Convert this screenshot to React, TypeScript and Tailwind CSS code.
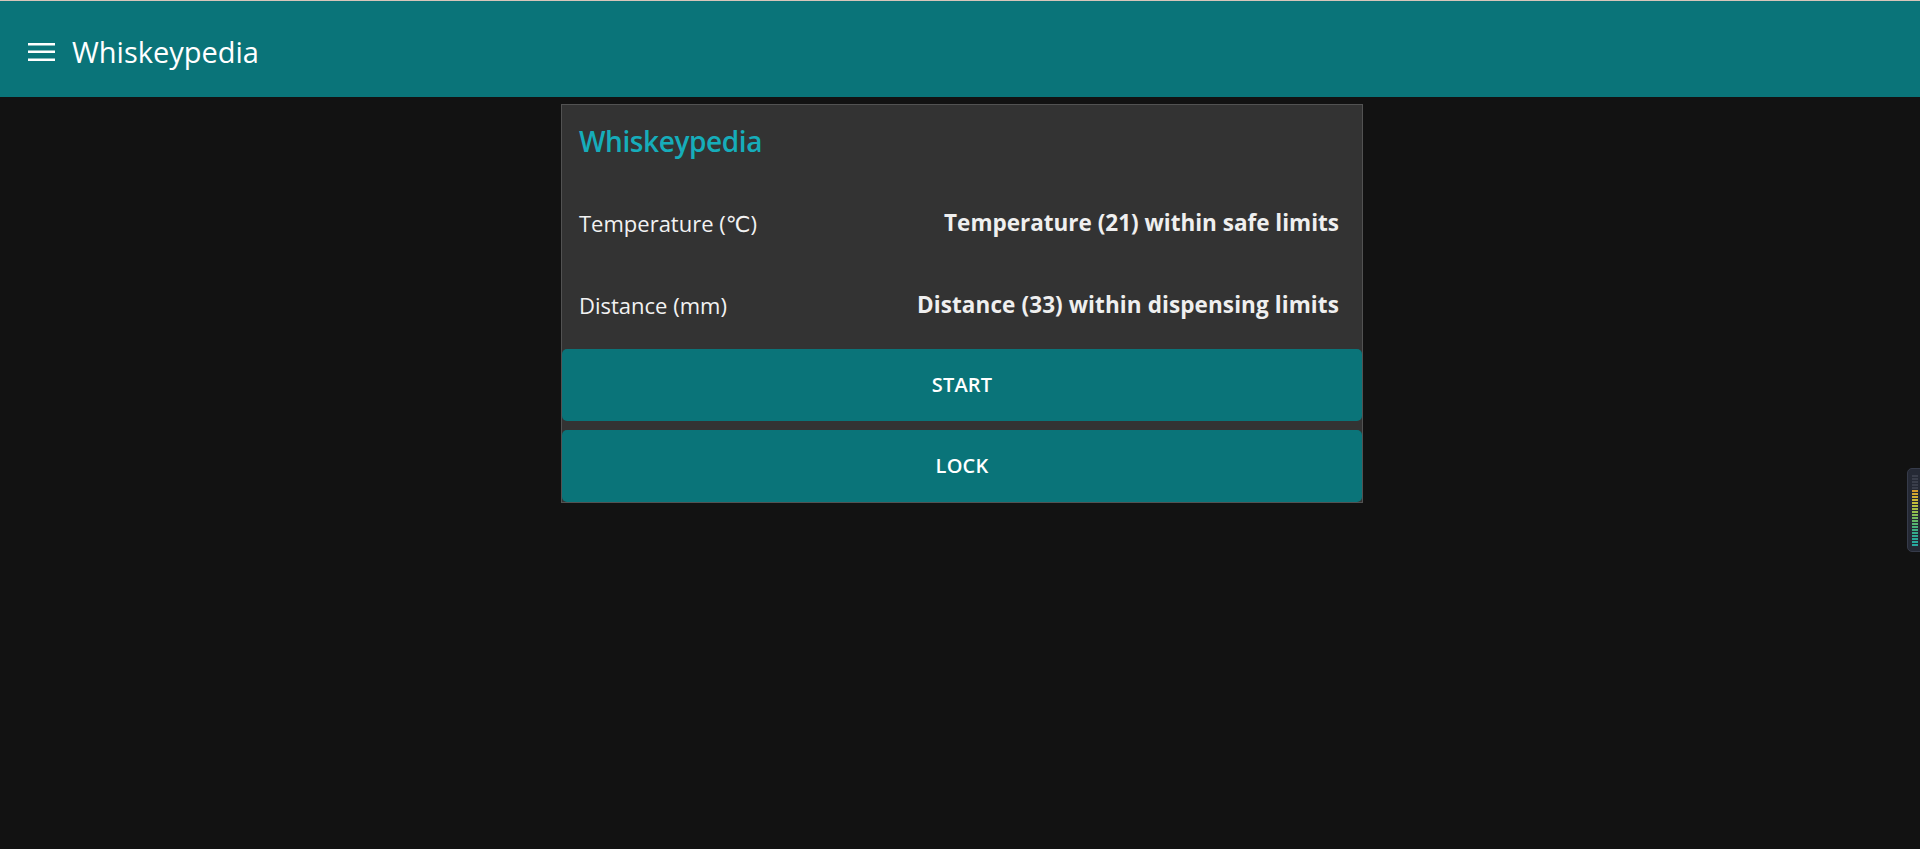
import React from "react";

const barColors = [
  "#3a3e4b", "#3a3e4b", "#3a3e4b", "#3a3e4b", "#3a3e4b",
  "#d39b2c", "#d3a52f", "#cfae33", "#c9b836", "#c2bf3a", "#b5c13f", "#a6c045",
  "#95bf4c", "#84bd55", "#73ba5e", "#63b767", "#55b470", "#48b179", "#3dae82",
  "#35ac8b", "#2fab92", "#2baa98", "#29a99c", "#27a8a0",
];

function Meter() {
  return (
    <div className="absolute left-[1907px] top-[468px] w-[24px] h-[84px] rounded-l-[5px] bg-[#252935] border border-[#363b4a] pt-[6px] pl-[4px] flex flex-col gap-[1px]">
      {barColors.map((c, i) => (
        <div key={i} className="w-[6px] h-[2px]" style={{ backgroundColor: c }} />
      ))}
    </div>
  );
}

export default function App() {
  return (
    <div
      className="relative w-full h-[849px] overflow-hidden bg-[#121212] text-white"
      style={{ fontFamily: '"Open Sans", "DejaVu Sans", sans-serif' }}
    >
      <div className="h-[1px] bg-[#d8c5ba]" />
      <header className="h-[96px] bg-[#0a7479] flex items-center pl-[28px] pt-[5px]">
        <svg width="27" height="18" viewBox="0 0 27 18" className="shrink-0">
          <rect x="0" y="0" width="27" height="2.5" fill="#ffffff" />
          <rect x="0" y="7.5" width="27" height="2.5" fill="#ffffff" />
          <rect x="0" y="15.5" width="27" height="2.5" fill="#ffffff" />
        </svg>
        <span className="ml-[17px] text-[29px] leading-[40px] text-white">Whiskeypedia</span>
      </header>
      <main className="flex justify-center pt-[7px] pl-[4px]">
        <div className="w-[802px] bg-[#333333] border border-[#525252] flex flex-col">
          <div className="pt-[16px] pb-[21px] pl-[17px] text-[28px] leading-[40px] font-semibold tracking-[-0.4px] text-[#16adba]">
            Whiskeypedia
          </div>
          <div className="h-[82px] flex items-center justify-between pl-[17px] pr-[23px] text-[22px] leading-[32px]">
            <span className="text-[#f2f2f2]">Temperature (℃)</span>
            <span className="text-[22.5px] font-bold text-[#efefef]">Temperature (21) within safe limits</span>
          </div>
          <div className="h-[82px] flex items-center justify-between pl-[17px] pr-[23px] text-[22px] leading-[32px]">
            <span className="text-[#f2f2f2]">Distance (mm)</span>
            <span className="text-[22.5px] font-bold tracking-[0.1px] text-[#efefef]">Distance (33) within dispensing limits</span>
          </div>
          <div className="mt-[3px] flex flex-col gap-[9px]">
            <button className="h-[72px] w-full rounded-[5px] bg-[#0a7479] text-white font-semibold text-[20px] tracking-[0.2px]">
              START
            </button>
            <button className="h-[72px] w-full rounded-[5px] bg-[#0a7479] text-white font-semibold text-[20px] tracking-[0.2px]">
              LOCK
            </button>
          </div>
        </div>
      </main>
      <Meter />
    </div>
  );
}
